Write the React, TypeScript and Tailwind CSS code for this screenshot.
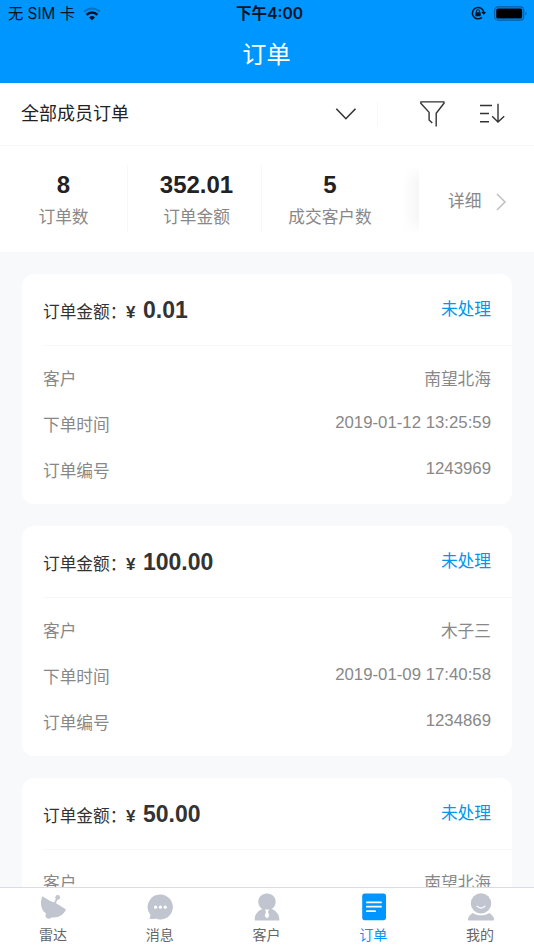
import React from "react";

const sans = "font-['Liberation_Sans','Noto_Sans_CJK_SC',sans-serif]";

function Header() {
  return (
    <header className="h-[83px] shrink-0 bg-[#0096ff]">
      <div className="grid h-7 grid-cols-3 items-center pl-2 pr-[7px] font-['Inter','Noto_Sans_CJK_SC',sans-serif] text-[#001426]">
        <div className="flex items-center gap-2 text-[15.3px] leading-7">
          <span className="whitespace-nowrap">无 SIM 卡</span>
          <svg width="18" height="14" viewBox="0 0 18 14" fill="none">
            <path d="M1 4.7C5.5 .3 12.5 .3 17 4.7" stroke="#0873c0" strokeWidth="2" />
            <path d="M3.6 7.8C6.7 4.7 11.3 4.7 14.4 7.8" stroke="#001426" strokeWidth="2.5" />
            <path d="M9 13.3 6 10.4a4.3 4.3 0 0 1 6 0Z" fill="#001426" />
          </svg>
        </div>
        <div className="pl-1 text-center text-[15.6px] font-semibold leading-7">下午4:00</div>
        <div className="flex items-center justify-end gap-[7px] pb-[2px]">
          <svg width="16" height="14" viewBox="0 0 16 14" fill="none" stroke="#001426">
            <path d="M10.9 11.4A5.7 5.7 0 1 1 12.7 6" strokeWidth="1.5" />
            <path d="m10.2 6 2.6 3 2.3-3Z" fill="#001426" stroke="none" />
            <rect x="4.3" y="6.2" width="5.4" height="4" rx=".5" fill="#001426" stroke="none" />
            <path d="M5.5 6.4V5.2a1.5 1.5 0 0 1 3 0v1.2" strokeWidth="1.1" />
          </svg>
          <svg width="33" height="15" viewBox="0 0 33 15" fill="none">
            <rect x=".7" y=".9" width="29" height="13.2" rx="3.2" stroke="#075b98" strokeWidth="1.1" />
            <rect x="2.2" y="2.5" width="26" height="10" rx="1.5" fill="#000" />
            <path d="M31.3 5.4c1.7.8 1.7 3.4 0 4.2Z" fill="#075b98" />
          </svg>
        </div>
      </div>
      <h1 className="pr-px pt-px text-center text-[24.2px] font-normal leading-[52px] text-white">订单</h1>
    </header>
  );
}

function FilterBar() {
  return (
    <div className="flex h-[63px] shrink-0 items-center border-b border-[#f7f7f7] bg-white pl-[21px] pr-7 text-[#333]">
      <span className="flex-1 pt-px text-[18px] text-[#222]">全部成员订单</span>
      <svg width="22" height="14" viewBox="0 0 22 14" fill="none" stroke="currentColor" strokeWidth="1.6">
        <path d="m1.3 1.8 9.6 9.9 9.6-9.9" />
      </svg>
      <div className="ml-5 h-6 w-px bg-[#f7f7f7]" />
      <svg className="ml-[42px]" width="26" height="28" viewBox="0 0 26 28" fill="none" stroke="currentColor" strokeWidth="1.4" strokeLinejoin="round">
        <path d="M16.2 26.5V13.2L24 3.2V1.9H.8v1.3l8.3 9.2v7.7l3.2 3" />
      </svg>
      <svg className="ml-[33px]" width="27" height="22" viewBox="0 0 27 22" fill="none" stroke="currentColor" strokeWidth="1.4">
        <path d="M1 2.5h12M1 10.5h9M1 18.7h9M19 .8v18M13.2 13.2l5.8 5.8 6.2-5.8" />
      </svg>
    </div>
  );
}

function Stat({ value, label, width }: { value: string; label: string; width: string }) {
  return (
    <div className={`flex h-[68px] flex-col items-center ${width}`}>
      <strong className="pt-[5px] text-[24px] leading-[30px] text-[#222]">{value}</strong>
      <span className="pt-0.5 text-[16.7px] leading-8 text-[#888]">{label}</span>
    </div>
  );
}

function Summary() {
  return (
    <section className="flex h-[106px] shrink-0 bg-white pt-[19px]">
      <Stat value="8" label="订单数" width="w-[128px] border-r border-[#f7f7f7]" />
      <Stat value="352.01" label="订单金额" width="w-[134px] border-r border-[#f7f7f7] pl-1" />
      <Stat value="5" label="成交客户数" width="w-[136px]" />
      <div className="h-[70px] w-[21px] bg-[linear-gradient(to_right,white_20%,#f6f6f6)] [mask-image:linear-gradient(transparent,black_25%,black_75%,transparent)]" />
      <div className="flex h-[70px] flex-1 items-center pl-[29px] pt-[3px] text-[16.7px] text-[#888]">
        <span>详细</span>
        <svg className="ml-[14px]" width="12" height="20" viewBox="0 0 12 20" fill="none" stroke="#bbb" strokeWidth="1.4">
          <path d="m2 2 8 8-8 8" />
        </svg>
      </div>
    </section>
  );
}

type Order = { amount: string; customer: string; time?: string; id?: string };

const orders: Order[] = [
  { amount: "0.01", customer: "南望北海", time: "2019-01-12 13:25:59", id: "1243969" },
  { amount: "100.00", customer: "木子三", time: "2019-01-09 17:40:58", id: "1234869" },
  { amount: "50.00", customer: "南望北海" },
];

function Row({ label, value }: { label: string; value: string }) {
  return (
    <div className="flex h-[46px] items-center justify-between">
      <span>{label}</span>
      <span>{value}</span>
    </div>
  );
}

function NumberRow({ label, value }: { label: string; value: string }) {
  return (
    <div className="flex h-[46px] items-center justify-between">
      <span>{label}</span>
      <span className="pb-1.5 text-[16.8px]">{value}</span>
    </div>
  );
}

function OrderCard({ order }: { order: Order }) {
  return (
    <article className="h-[230px] shrink-0 rounded-xl bg-white pl-[21px]">
      <div className="flex h-[72px] items-center justify-between border-b border-[#f7f7f7] pr-[21px]">
        <div className="flex items-baseline text-[#333]">
          <span className="w-[83px] whitespace-nowrap text-[16.7px]">订单金额：</span>
          <span className="w-[17px] text-[17px] font-bold">¥</span>
          <strong className="text-[23px] leading-9">{order.amount}</strong>
        </div>
        <span className="text-[16.7px] text-[#0096f0]">未处理</span>
      </div>
      <div className="pr-[21px] pt-[11px] text-[16.7px] text-[#888]">
        <Row label="客户" value={order.customer} />
        {order.time && <NumberRow label="下单时间" value={order.time} />}
        {order.id && <NumberRow label="订单编号" value={order.id} />}
      </div>
    </article>
  );
}

function RadarIcon() {
  return (
    <svg width="28" height="28" viewBox="0 0 28 28" fill="#c1c5cf">
      <path d="M3.4 3.2C8 6.3 11 8.2 15.5 9.6 20 12 23.5 14.3 27 16.5c-2.4 5.7-8.2 8.8-14.2 7.8-1 2.3-6.5 1.8-6.3-1.8 0-.8.2-1.4.6-1.9C1.7 17 .8 9.2 3.4 3.2Z" />
      <path d="m15.4 11 2.8-5.9" stroke="#c1c5cf" strokeWidth="1.8" />
      <circle cx="18.7" cy="4.4" r="2.4" />
    </svg>
  );
}

function MessageIcon() {
  return (
    <svg width="28" height="28" viewBox="0 0 28 28" fill="#c1c5cf">
      <path d="M14.4 1.6a12.4 12.4 0 1 1-4.8 23.8c-1.7.7-3.8.9-6.1.4.7-1.2 1-2.5.9-4A12.4 12.4 0 0 1 14.4 1.6Z" />
      <g fill="white"><circle cx="9.6" cy="14.2" r="1.6" /><circle cx="14.4" cy="14.2" r="1.6" /><circle cx="19.2" cy="14.2" r="1.6" /></g>
    </svg>
  );
}

function CustomerIcon() {
  return (
    <svg width="28" height="28" viewBox="0 0 28 28" fill="#c1c5cf">
      <path d="M14 .4c5.4 0 8.7 3.7 8.7 8.3 0 3.2-1.6 5.8-4 7.3 4.4 1.7 7.5 5.2 7.7 10.4q0 1.2-1.2 1.2H2.8q-1.2 0-1.2-1.2C1.8 21.2 4.9 17.7 9.3 16c-2.4-1.5-4-4.1-4-7.3C5.3 4.1 8.6.4 14 .4Z" />
      <path d="m12.1 16 1.9.7 1.9-.7-.8 3 1.2 3.9-2.3 2.5-2.3-2.5 1.2-3.9Z" fill="white" />
    </svg>
  );
}

function OrderIcon() {
  return (
    <svg width="28" height="28" viewBox="0 0 28 28">
      <rect x="2.2" y=".6" width="23.8" height="26.6" rx="2.6" fill="#0096ff" />
      <path d="M6.9 9.4H21M6.9 13.7H21M6.9 18.2h8.2" fill="none" stroke="white" strokeWidth="1.8" strokeLinecap="round" />
    </svg>
  );
}

function ProfileIcon() {
  return (
    <svg width="28" height="28" viewBox="0 0 28 28" fill="#c1c5cf">
      <circle cx="14" cy="10.4" r="10.2" />
      <path d="M5.7 19.9c4.8 3.2 11.8 3.2 16.6 0 2.6 1.5 4.2 3.5 4.8 6.1.2.8-.1 1.4-1 1.4H1.9c-.9 0-1.2-.6-1-1.4.6-2.6 2.2-4.6 4.8-6.1Z" />
      <path d="M10 13.2c2.4 2.6 5.6 2.6 8 0" fill="none" stroke="white" strokeWidth="1.2" strokeLinecap="round" />
    </svg>
  );
}

const tabs = [
  { label: "雷达", Icon: RadarIcon },
  { label: "消息", Icon: MessageIcon },
  { label: "客户", Icon: CustomerIcon },
  { label: "订单", Icon: OrderIcon, active: true },
  { label: "我的", Icon: ProfileIcon },
];

function TabBar() {
  return (
    <nav className="grid h-[63px] shrink-0 grid-cols-5 border-t border-[#dcdde2] bg-white pt-[5px]">
      {tabs.map(({ label, Icon, active }) => (
        <div key={label} className={`flex flex-col items-center text-[14px] leading-[28px] ${active ? "text-[#0096ff]" : "text-[#666]"}`}>
          <Icon />
          <span className="pr-px">{label}</span>
        </div>
      ))}
    </nav>
  );
}

export default function App() {
  return (
    <div className={`flex h-[950px] w-[534px] flex-col overflow-hidden bg-[#f8f9fb] ${sans}`}>
      <Header />
      <FilterBar />
      <Summary />
      <main className="flex min-h-0 flex-1 flex-col gap-[22px] overflow-hidden px-[22px] pt-[22px]">
        {orders.map((order) => <OrderCard key={order.amount} order={order} />)}
      </main>
      <TabBar />
    </div>
  );
}
